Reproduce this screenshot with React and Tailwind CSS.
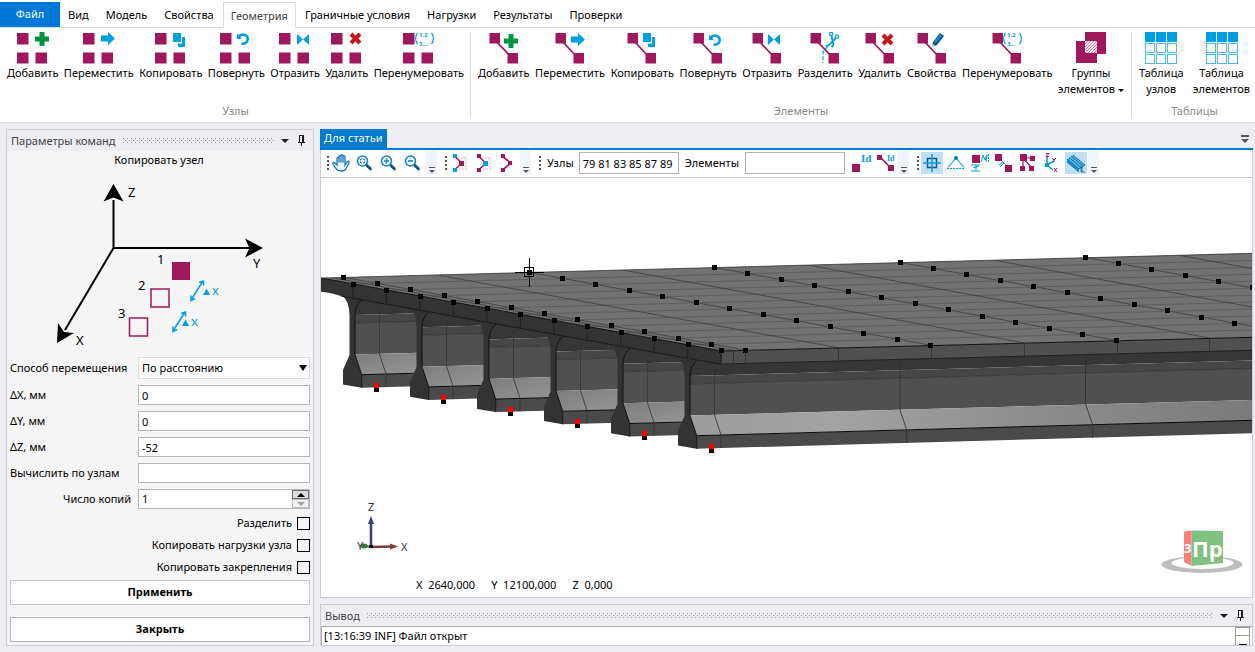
const NODE = '#a0185c';
const BLUE = '#009fe3';

const TABS = ['Вид', 'Модель', 'Свойства', 'Геометрия', 'Граничные условия', 'Нагрузки', 'Результаты', 'Проверки'];

/* ---------- ribbon glyphs ---------- */

const Plus = ({ x, y }) => (
	<path d={`M${x + 4.5} ${y}h5v4.5h4.5v5h-4.5v4.5h-5v-4.5h-4.5v-5h4.5z`} fill="#009640" />
);

const Arrow = ({ x, y }) => (
	<path d={`M${x} ${y + 3.5}h7v-3.5l7 6.5l-7 6.5v-3.500h-7z`} fill={BLUE} />
);

const Copy = ({ x, y }) => (
	<g fill={BLUE}>
		<path d={`M${x} ${y}h8v9h-8z`} />
		<path d={`M${x + 9} ${y + 4}h3v10h-7v-3.500h4z`} />
	</g>
);

const Rotate = ({ x, y }) => (
	<g fill="none" stroke={BLUE}>
		<path d={`M${x + 1.5} ${y + 4}c3 -4.500 9.500 -2.500 9.200 2.500c-.2 3 -3 4.600 -6.200 4.200`} strokeWidth="2.600" />
		<path d={`M${x} ${y + .5}v5.500h5z`} fill={BLUE} stroke="none" />
	</g>
);

const Mirror = ({ x, y }) => (
	<path d={`M${x} ${y}l6 5.500l6 -5.500v11l-6 -5.500l-6 5.500z`} fill={BLUE} />
);

const Cross = ({ x, y }) => (
	<path d={`M${x + 2} ${y + 2}l9 9M${x + 11} ${y + 2}l-9 9`} stroke="#c5161d" strokeWidth="4" />
);

const Numbers = ({ x, y }) => (
	<g fill="none" stroke={BLUE} strokeWidth="1.200">
		<path d={`M${x + 2.5} ${y}c-2.500 3 -2.500 8 0 11M${x + 16.5} ${y}c2.500 3 2.500 8 0 11`} />
		<g fontSize="6" fontWeight="700" fill={BLUE} stroke="none">
			<text x={x + 4} y={y + 4}>1,2</text>
			<text x={x + 4} y={y + 13}>3…</text>
		</g>
	</g>
);

const Scissors = ({ x, y }) => (
	<g fill="none" stroke={BLUE} strokeWidth="1.200">
		<circle cx={x + 5} cy={y + 2} r="1.700" />
		<circle cx={x + 11} cy={y + 4.5} r="1.700" />
		<path d={`M${x + 5.5} ${y + 4}l2 9l-2 2M${x + 10} ${y + 6}l-7 7l-3.500 1`} strokeWidth="1.800" />
		<path d={`M${x + 2} ${y + 14}l-5 6v11`} strokeDasharray="4 2" />
	</g>
);

const Pencil = ({ x, y }) => (
	<g>
		<path d={`M${x - 2} ${y + 14}l1 -5l7 -9l4 3l-7 9z`} fill="#17507f" />
		<path d={`M${x + 1} ${y + 9.5}l6 -7.500`} stroke={BLUE} strokeWidth="2" />
		<path d={`M${x - 2} ${y + 14}l.8 -3l2.200 1.800z`} fill="#dde8ef" />
	</g>
);

const NodesIcon = ({ children }) => (
	<svg width="32" height="32" viewBox="0 0 32 32">
		<path d="M0 1h11.500v11.500h-11.500zM0 20.500h11.500v11h-11.500zM18.500 20.500h11.500v11h-11.500z" fill={NODE} />
		{children}
	</svg>
);

const ElementIcon = ({ children }) => (
	<svg width="32" height="32" viewBox="0 0 32 32">
		<path d="M7 8l17 18" stroke={NODE} strokeWidth="1.800" />
		<path d="M1.500 1h10.500v10.500h-10.500zM19.500 21h10.500v10.500h-10.500z" fill={NODE} />
		{children}
	</svg>
);

const GroupsIcon = () => (
	<svg width="32" height="32" viewBox="0 0 32 32">
		<path d="M10 0h21v22h-21zM1 9h21v22h-21z" fill={NODE} />
		<path d="M10 9h12v12h-12z" fill="#f7e6ee" />
		<path d="M10 12l3 -3M10 15l6 -6M10 18l9 -9M10 21l12 -12M13 21l9 -9M16 21l6 -6M19 21l3 -3" stroke={NODE} strokeWidth=".5" />
	</svg>
);

const TableIcon = () => (
	<svg width="32" height="32" viewBox="0 0 32 32" shapeRendering="crispEdges">
		<path d="M0 0h10v10h-10zM11 0h10v10h-10zM22 0h10v10h-10z" fill={BLUE} />
		<g fill="none" stroke="#4db8e8">
			{[0, 11, 22].map((x) => (
				<path key={x} d={`M${x + .5} 11.500h9v9h-9zM${x + .5} 22.500h9v9h-9z`} />
			))}
		</g>
	</svg>
);

const NODE_TOOLS = [
	['Добавить', <NodesIcon><Plus x={18} y={0} /></NodesIcon>],
	['Переместить', <NodesIcon><Arrow x={18} y={0} /></NodesIcon>],
	['Копировать', <NodesIcon><Copy x={18} y={1} /></NodesIcon>],
	['Повернуть', <NodesIcon><Rotate x={17} y={1} /></NodesIcon>],
	['Отразить', <NodesIcon><Mirror x={18} y={2} /></NodesIcon>],
	['Удалить', <NodesIcon><Cross x={18} y={0} /></NodesIcon>],
	['Перенумеровать', <NodesIcon><Numbers x={12} y={1} /></NodesIcon>],
];

const ELEMENT_TOOLS = [
	['Добавить', <ElementIcon><Plus x={16} y={2} /></ElementIcon>],
	['Переместить', <ElementIcon><Arrow x={17} y={1} /></ElementIcon>],
	['Копировать', <ElementIcon><Copy x={17} y={1} /></ElementIcon>],
	['Повернуть', <ElementIcon><Rotate x={17} y={2} /></ElementIcon>],
	['Отразить', <ElementIcon><Mirror x={17} y={2} /></ElementIcon>],
	['Разделить', <ElementIcon><Scissors x={17} y={0} /></ElementIcon>],
	['Удалить', <ElementIcon><Cross x={17} y={1} /></ElementIcon>],
	['Свойства', <ElementIcon><Pencil x={18} y={1} /></ElementIcon>],
	['Перенумеровать', <ElementIcon><Numbers x={12} y={1} /></ElementIcon>],
];

const RibbonButton = ({ icon, children }) => (
	<button type="button" className="flex flex-col items-center px-[2px] leading-4 whitespace-nowrap hover:bg-sky-50">
		<span className="mb-px block size-8">{icon}</span>
		<span>{children}</span>
	</button>
);

const RibbonGroup = ({ title, className, children }) => (
	<section className={`flex flex-col justify-between ${className}`}>
		<div className="flex justify-between">{children}</div>
		<h2 className="text-center leading-4 text-[#8a8a8a]">{title}</h2>
	</section>
);

const Ribbon = () => (
	<header className="border-b border-[#dcdce0] bg-white">
		<nav className="flex items-end gap-px border-b border-[#dcdce0] pt-[2px] leading-6">
			<button type="button" className="-mr-px w-[60px] bg-[#0078d7] pb-px text-white">Файл</button>
			{TABS.map((tab) => (
				<button
					key={tab}
					type="button"
					className={
						tab === 'Геометрия'
							? '-mb-px border border-b-0 border-[#dcdce0] bg-white px-[7px] pt-px text-[#444]'
							: 'px-2 pt-px'
					}
				>
					{tab}
				</button>
			))}
		</nav>
		<div className="flex h-[94px] pt-1 pb-[3px]">
			<RibbonGroup title="Узлы" className="w-[471px] border-r border-[#dcdce0] pr-1 pl-[5px]">
				{NODE_TOOLS.map(([label, icon]) => (
					<RibbonButton key={label} icon={icon}>{label}</RibbonButton>
				))}
			</RibbonGroup>
			<RibbonGroup title="Элементы" className="w-[661px] border-r border-[#dcdce0] pr-[5px] pl-[5px]">
				{ELEMENT_TOOLS.map(([label, icon]) => (
					<RibbonButton key={label} icon={icon}>{label}</RibbonButton>
				))}
				<RibbonButton icon={<GroupsIcon />}>
					Группы
					<br />
					элементов <span className="inline-block border-x-[3px] border-t-[3px] border-x-transparent border-t-black align-middle" />
				</RibbonButton>
			</RibbonGroup>
			<RibbonGroup title="Таблицы" className="flex-1 pr-[3px] pl-[5px]">
				<RibbonButton icon={<TableIcon />}>Таблица<br />узлов</RibbonButton>
				<RibbonButton icon={<TableIcon />}>Таблица<br />элементов</RibbonButton>
			</RibbonGroup>
		</div>
	</header>
);

/* ---------- tool window header ---------- */

const PanelHeader = ({ title, id }) => (
	<div className="flex h-[21px] items-center bg-[#eeeef2] pr-2 pl-1 text-[#444]">
		<h2 className="leading-4">{title}</h2>
		<svg className="mx-[7px] h-[5px] min-w-0 flex-1" shapeRendering="crispEdges">
			<pattern id={id} width="4" height="4" patternUnits="userSpaceOnUse">
				<path d="M0 0h1v1h-1zM2 2h1v1h-1z" fill="#999" />
			</pattern>
			<rect width="100%" height="5" fill={`url(#${id})`} />
		</svg>
		<button type="button" aria-label="Меню окна" className="mr-[9px]">
			<svg width="8" height="4" viewBox="0 0 8 4"><path d="M0 0h8l-4 4z" fill="#1e1e1e" /></svg>
		</button>
		<button type="button" aria-label="Закрепить">
			<svg width="7" height="11" viewBox="0 0 7 11" fill="none" stroke="#1e1e1e" shapeRendering="crispEdges">
				<path d="M1.500 7v-6.500h4v6.500M0 7.500h7M3.500 7v4M4.500 1v6" />
			</svg>
		</button>
	</div>
);

/* ---------- command parameters ---------- */

const CopyDiagram = () => (
	<svg className="block w-full" viewBox="7 169 306 186" fontSize="13">
		<g stroke="#000" strokeWidth="2">
			<path d="M113.500 248V200M113 248H250M113.500 248L65 330" />
		</g>
		<path d="M113.500 184l10 17.500l-10 -4l-10 4zM263 248l-18 -9.500l4.500 9.500l-4.500 9.500zM57 343l1 -20l6 9l10 1z" />
		<text x="128" y="197">Z</text>
		<text x="253" y="268">Y</text>
		<text x="76" y="345">X</text>
		<text x="157" y="264">1</text>
		<text x="138" y="290">2</text>
		<text x="118" y="318">3</text>
		<path d="M172 262h18v18h-18z" fill={NODE} />
		<path d="M151 289h18v18h-18zM129.500 318h18v18h-18z" fill="#f9f5f7" stroke={NODE} strokeWidth="1.500" />
		<g stroke={BLUE} strokeWidth="1.500" fill="none">
			<path d="M191 300L203 281M191 295.500v5l4 -2M199 282.500l4.500 -1.500v4.500" />
			<path d="M173 331L185 312M173 326.500v5l4 -2M181 313.500l4.500 -1.500v4.500" />
		</g>
		<g fill={BLUE}>
			<path d="M203 295l3.500 -6.500l3.500 6.500zM182 326l3.500 -6.500l3.500 6.500z" />
			<text x="212" y="295">x</text>
			<text x="191" y="326">x</text>
		</g>
	</svg>
);

const FIELDS = [
	['dx', 'ΔX, мм', '0'],
	['dy', 'ΔY, мм', '0'],
	['dz', 'ΔZ, мм', '-52'],
	['byNodes', 'Вычислить по узлам', ''],
];

const CHECKS = ['Разделить', 'Копировать нагрузки узла', 'Копировать закрепления'];

const CommandPanel = () => (
	<aside className="flex w-[308px] shrink-0 flex-col border border-[#ccccdc] bg-[#f5f5f5]">
		<PanelHeader title="Параметры команд" id="dots-params" />
		<h3 className="pr-[2px] text-center leading-[18px]">Копировать узел</h3>
		<CopyDiagram />
		<form className="flex flex-1 flex-col px-[3px] pt-[2px] pb-[3px]" onSubmit={(e) => e.preventDefault()}>
			<div className="grid grid-cols-[128px_minmax(0,1fr)] items-center gap-y-[6px]">
				<label htmlFor="method" className="whitespace-nowrap">Способ перемещения</label>
				<div className="relative">
					<select id="method" className="block h-[22px] w-full appearance-none border border-[#dcdcdc] bg-white px-[3px]">
						<option>По расстоянию</option>
					</select>
					<span className="pointer-events-none absolute top-2 right-[3px] border-x-4 border-t-[6px] border-x-transparent border-t-black" />
				</div>
				{FIELDS.map(([id, label, value]) => (
					<div key={id} className="contents">
						<label htmlFor={id}>{label}</label>
						<input id={id} defaultValue={value} className="h-5 w-full border border-[#b4b4b4] bg-white px-[3px]" />
					</div>
				))}
				<label htmlFor="count" className="pr-[7px] text-right">Число копий</label>
				<div className="flex h-5 border border-[#b4b4b4] bg-white">
					<input id="count" defaultValue="1" className="min-w-0 flex-1 px-[3px]" />
					<div className="grid w-[17px] grid-rows-2">
						<button type="button" aria-label="Больше" className="grid place-items-center border border-[#707070] bg-[#dcdcdc]">
							<svg width="8" height="4" viewBox="0 0 8 4"><path d="M0 4h8l-4 -4z" /></svg>
						</button>
						<button type="button" aria-label="Меньше" className="grid place-items-center border border-[#c0c0c0] bg-[#f0f0f0]">
							<svg width="8" height="4" viewBox="0 0 8 4"><path d="M0 0h8l-4 4z" fill="#a0a0a0" /></svg>
						</button>
					</div>
				</div>
			</div>
			<div className="mt-[3px] mb-[2px]">
				{CHECKS.map((label) => (
					<label key={label} className="flex h-[22px] items-center justify-end gap-[5px]">
						{label}
						<input type="checkbox" className="size-[13px] appearance-none border border-black checked:bg-black" />
					</label>
				))}
			</div>
			<button type="submit" className="h-[25px] border border-[#c8c8c8] bg-white font-bold">Применить</button>
			<button type="button" className="mt-auto h-[25px] border border-[#b4b4b4] bg-white font-bold">Закрыть</button>
		</form>
	</aside>
);

/* ---------- view toolbar ---------- */

const Grip = () => (
	<svg className="mr-px ml-[5px] shrink-0" width="3" height="14" viewBox="0 0 3 14" shapeRendering="crispEdges">
		<path d="M1.500 0v14" stroke="#555" strokeWidth="2" strokeDasharray="2 2" />
	</svg>
);

const Overflow = () => (
	<button type="button" aria-label="Ещё" className="mr-[2px] flex h-6 w-[11px] items-end justify-center bg-[#f0f4fb] pb-px">
		<svg width="6" height="7" viewBox="0 0 6 7">
			<path d="M0 .5h6" stroke="#555" />
			<path d="M0 3h6l-3 3z" fill="#555" />
		</svg>
	</button>
);

const Tool = ({ label, active, children }) => (
	<button type="button" aria-label={label} className="grid h-6 w-6 place-items-center">
		<span className={active ? 'grid size-[22px] place-items-center bg-[#bfdffb]' : 'grid place-items-center'}>
			<svg width="20" height="20" viewBox="0 0 20 20" fill="none">{children}</svg>
		</span>
	</button>
);

const Lens = ({ children }) => (
	<g transform="translate(-2 0)">
		<path d="M12.500 12l4 4" stroke="#17507f" strokeWidth="2.800" strokeLinecap="round" />
		<circle cx="8.500" cy="8" r="5" stroke="#1683c4" strokeWidth="1.600" fill="#f4fbff" />
		<g stroke="#1683c4" strokeWidth="1.600">{children}</g>
	</g>
);

const square = (x, y, s = 4) => `M${x} ${y}h${s}v${s}h-${s}z`;

const ViewToolbar = () => (
	<div className="flex h-7 items-center border-b border-[#ccc] bg-white pb-px">
		<Grip />
		<Tool label="Панорама">
			<path d="M5 12v-6.500c0-1.500 2-1.500 2 0v4v-6c0-1.500 2-1.500 2 0v6v-6.800c0-1.500 2-1.500 2 0v6.800v-5.500c0-1.500 2-1.500 2 0v8l2-3c1-1.500 2.600-.5 2 .8l-3 6c-1.500 3-8 3-10-.3l-3-4.500c-.6-1.500 1-2 2-1z" fill="#eaf6fd" stroke="#1475b5" strokeWidth="1.300" />
		</Tool>
		<Tool label="Показать всё"><Lens><path d="M6.500 7.500v-1.500h1.500M9 6h1.500v1.500M10.500 8.500v1.500h-1.500M8 10h-1.500v-1.500" strokeWidth="1" /></Lens></Tool>
		<Tool label="Увеличить"><Lens><path d="M6 8h5M8.500 5.500v5" /></Lens></Tool>
		<Tool label="Уменьшить"><Lens><path d="M6 8h5" /></Lens></Tool>
		<Overflow />
		<Grip />
		<Tool label="Выбрать узлы">
			<path d="M5 4l7 6l-7 6.500" stroke={NODE} strokeWidth="1.500" />
			<path d="M8 5h8v11h-8" stroke="#dba6c0" strokeDasharray="2 1" />
			<path d={square(3, 1) + square(3, 15)} fill={BLUE} />
			<path d={square(9, 8, 5)} fill={NODE} />
		</Tool>
		<Tool label="Выбрать узел и элементы">
			<path d="M5 4l7 6l-7 6.500" stroke={NODE} strokeWidth="1.500" />
			<path d="M8 5h8v11h-8" stroke="#dba6c0" strokeDasharray="2 1" />
			<path d={square(3, 1) + square(3, 15)} fill={NODE} />
			<path d={square(9, 8, 5)} fill={BLUE} />
		</Tool>
		<Tool label="Выбрать элементы">
			<path d="M5 4l8 6l-8 6.500" stroke={NODE} strokeWidth="1.700" />
			<path d={square(3, 1) + square(3, 15) + square(10, 8)} fill={NODE} />
		</Tool>
		<Overflow />
		<Grip />
		<label htmlFor="nodes" className="mr-[5px] ml-[5px]">Узлы</label>
		<input id="nodes" defaultValue="79 81 83 85 87 89" className="h-[22px] w-[100px] border border-[#b4b4b4] bg-white px-[3px]" />
		<label htmlFor="elements" className="mx-[6px]">Элементы</label>
		<input id="elements" className="mr-[5px] h-[22px] w-[100px] border border-[#b4b4b4] bg-white px-[3px]" />
		<Tool label="Номера узлов">
			<path d={square(0, 11, 8)} fill={NODE} />
			<text x="9" y="9" fontSize="11" fill={BLUE} className="font-['Liberation_Serif',serif] font-bold">Id</text>
		</Tool>
		<Tool label="Номера элементов">
			<path d="M4 4l10 10" stroke={NODE} strokeWidth="1.500" />
			<path d={square(1, 2, 5) + square(12, 12, 6)} fill={NODE} />
			<text x="11" y="8" fontSize="8" fill={BLUE} className="font-['Liberation_Serif',serif] font-bold">Id</text>
		</Tool>
		<Overflow />
		<Grip />
		<Tool label="Узлы сетки" active>
			<path d="M5.500 5.500h9v9h-9z" stroke="#17507f" strokeWidth="1.500" />
			<path d="M10 1v18M1 10h18" stroke={BLUE} strokeWidth="1.500" />
		</Tool>
		<Tool label="Закрепления">
			<path d="M10 5L2 14.500M10 5L18 14.500" stroke={BLUE} strokeWidth="1.100" />
			<path d="M1 15.500h18" stroke={BLUE} strokeDasharray="2 1" />
			<circle cx="10" cy="5" r="2" fill="#1475b5" />
		</Tool>
		<Tool label="Нагрузки">
			<path d={square(2, 2, 8)} fill={NODE} />
			<path d="M11 9l2-7l2 5l2-5l-1 7M1 12h9M3 15l6-2M1 18h9M6 12v5" stroke={BLUE} />
			<path d="M18.500 1v8" stroke={BLUE} strokeDasharray="2 1" />
		</Tool>
		<Tool label="Шарниры">
			<path d="M3 3l14 14" stroke={NODE} strokeDasharray="2 1" />
			<path d={square(1, 1, 7) + square(11, 12, 7)} fill={NODE} />
			<path d="M5 12l4-3M6 14l4-4" stroke={BLUE} />
		</Tool>
		<Tool label="Жёсткие связи">
			<path d="M5 5v11M5 5l9 10M6 5h10" stroke={NODE} strokeWidth="1.200" />
			<path d={square(2, 1, 7) + square(12, 3, 5) + square(2, 13, 5) + square(11, 13, 5)} fill={NODE} />
		</Tool>
		<Tool label="Оси">
			<path d="M5 4v8l7-4M5 12l6 5" stroke={BLUE} strokeWidth="1.500" />
			<path d={square(3, 10)} fill={BLUE} />
			<path d="M4 .5h3l-3 3h3M10 5l2 2l2-2M12 7v2M12 15l3 4M15 15l-3 4" stroke={NODE} />
		</Tool>
		<Tool label="Объёмный вид" active>
			<path d="M1 6l6-4l12 10l-6 4z" fill="#4fb9ea" />
			<path d="M1 6v3l12 10v-3z" fill={BLUE} />
			<path d="M1 6l12 10l6-4M3 4.500l12 10M5 3l12 10M7 2l12 10M1 9l12 10M15 14v5h4M16 13v6" stroke="#17507f" strokeWidth=".8" />
		</Tool>
		<Overflow />
	</div>
);

/* ---------- 3D scene ---------- */

// one step between neighbouring deck nodes, along the slab end
const STEP = [33.47, 6.07];
// one step between neighbouring girders
const BEAM = [67, 12.2];
const SLOPE = -0.0263;

const NODE_ROWS = [
	[343.7, 277.3, 13],
	[353.4, 284, 12],
	[529, 272.3, 13],
	[714.4, 267.5, 13],
	[900, 262.4, 11],
	[1085, 257.4, 6],
];

const MESH_STARTS = [
	[331.7, 277.6],
	[343.7, 277.3],
	[436.7, 274.9],
	[529, 272.3],
	[621.7, 269.9],
	[714.4, 267.5],
	[807.2, 265],
	[900, 262.4],
	[992.5, 259.9],
	[1085, 257.4],
	[1177.5, 255],
];

const strip = (y1, y2, x1, x2, w) =>
	`M${x1} ${y1}L${x1 + w} ${y1 - 0.0277 * w}V${y2 - 0.0277 * w}L${x2} ${y2}z`;

const Girder = ({ i, width }) => {
	const slope = (y) => y - 0.0277 * width;
	return (
		<g transform={`translate(${i * BEAM[0]} ${i * BEAM[1]})`}>
			<path d={strip(292, 315, 355, 355, width)} fill="#363636" />
			<path d={strip(315, 323, 355, 355, width)} fill="#464646" />
			<path d={strip(323, 354.5, 355, 355, width)} fill="#505050" />
			<path d={strip(354.5, 374.7, 355, 361.7, width)} fill={width > 100 ? 'url(#flangeLong)' : 'url(#flange)'} />
			<path d={strip(374.7, 387.7, 361.7, 361.7, width)} fill="#4a4a4a" />
			<path d={`M355 323L${355 + width} ${slope(323)}`} stroke="#2c2c2c" strokeWidth=".8" fill="none" />
			<path d={`M361.700 374.700L${361.7 + width} ${slope(374.7)}`} stroke="#0a0a0a" fill="none" />
			<path d="M382 304q-2.500 4 -2.500 13v37l6.500 20v13" stroke="#333" strokeWidth=".8" fill="none" />
			<path
				d="M338 295c8 1 11 8 11.500 20v40l-6.500 15v14.500l18.700 3.200v-13l-6.700 -20.200v-39.500q0 -10 7.500 -16z"
				fill="#333"
			/>
			<path d="M361.700 387.700v-13l-6.700 -20.200v-39.500q0 -10 7.500 -16" stroke="#111" strokeWidth="1" fill="none" />
		</g>
	);
};

const Scene = () => (
	<svg className="block w-full" viewBox="321 178 931 419">
		<defs>
			<linearGradient id="flange" x1="0" y1="0" x2="1" y2="1">
				<stop offset="0" stopColor="#7c7c7c" />
				<stop offset="1" stopColor="#969696" />
			</linearGradient>
			<linearGradient id="flangeLong">
				<stop offset="0" stopColor="#9c9c9c" />
				<stop offset=".25" stopColor="#a3a3a3" />
				<stop offset=".6" stopColor="#8d8d8d" />
				<stop offset="1" stopColor="#7a7a7a" />
			</linearGradient>
			<clipPath id="deckClip">
				<path d="M321 278L1252 253.300V337.300L722 351z" />
			</clipPath>
		</defs>

		{[0, 1, 2, 3, 4].map((i) => <Girder key={i} i={i} width={65} />)}
		<Girder i={5} width={575} />
		<g stroke="#2f2f2f" strokeWidth=".8" fill="none">
			<path d="M902.500 360q-2.500 4 -2.500 12v38l6.700 20v13" />
			<path d="M1088.500 355q-3 5 -3 14v35l7.200 21v13" />
		</g>

		<path d="M722 351L1252 337.300V350.300L722 364z" fill="#505050" />
		<path d="M722 364L1252 350.300" stroke="#222" />
		<g stroke="#2f2f2f" strokeWidth=".8">
			{[733.5, 745.5, 838.5, 931.5, 1024.5, 1117.5, 1209.5].map((x) => (
				<path key={x} d={`M${x} ${351 - (x - 722) * 0.0259}v13`} />
			))}
		</g>

		<path d="M321 278L722 351V364.500L341 296q-8 -3 -20 -4.300z" fill="#333" />
		<path d="M341 296L722 364.500" stroke="#111" strokeWidth=".7" />
		<g stroke="#1c1c1c" strokeWidth=".8">
			{Array.from({ length: 12 }, (_, j) => (
				<path key={j} d={`M${353 + j * STEP[0]} ${284 + j * STEP[1]}v13`} />
			))}
		</g>

		<path d="M321 278L1252 253.300V337.300L722 351z" fill="#727272" />
		<g clipPath="url(#deckClip)" stroke="#585858" strokeWidth=".8">
			{Array.from({ length: 12 }, (_, j) => {
				const x = 320 + j * STEP[0];
				const y = 278 + j * STEP[1];
				return <path key={j} d={`M${x} ${y}L1252 ${y + (1252 - x) * SLOPE}`} />;
			})}
		</g>
		<g clipPath="url(#deckClip)" stroke="#383838" strokeWidth=".7">
			{MESH_STARTS.map(([x, y]) => (
				<path key={x} d={`M${x} ${y}l${STEP[0] * 12} ${STEP[1] * 12}`} />
			))}
		</g>
		<path d="M321 278L722 351" stroke="#111" />
		<path d="M722 351L1252 337.300" stroke="#111" />
		<path d="M321 278L1252 253.300" stroke="#444" strokeWidth=".8" />

		<g shapeRendering="crispEdges">
			{NODE_ROWS.map(([x, y, n]) =>
				Array.from({ length: n }, (_, j) => (
					<rect key={`${x}-${j}`} x={Math.round(x + j * STEP[0] - 2.5)} y={Math.round(y + j * STEP[1] - 2.5)} width="5" height="5" />
				))
			)}
			{[0, 1, 2, 3, 4, 5].map((i) => {
				const x = Math.round(374.3 + i * BEAM[0]);
				const y = Math.round(382.5 + i * BEAM[1]);
				return (
					<g key={i}>
						<rect x={x} y={y + 4} width="5" height="5" />
						<rect x={x} y={y} width="5" height="5" fill="#f00" />
					</g>
				);
			})}
			<path d="M529.500 258v29M515 272.500h29M524.500 267.500h9v9h-9z" stroke="#000" fill="none" />
		</g>
	</svg>
);

const Triad = () => (
	<svg width="60" height="60" viewBox="354 494 60 60" className="absolute bottom-[43px] left-[33px]" fontSize="11">
		<path d="M371 547L362 545.500" stroke="#3a7a3a" strokeWidth="2" />
		<ellipse cx="364" cy="546" rx="3.500" ry="2.500" fill="#3a7a3a" />
		<path d="M371 547L392 546.500" stroke="#7d3c3c" strokeWidth="2.500" />
		<path d="M390 543.500l8 3l-8 3z" fill="#7d3c3c" />
		<path d="M371 546V522" stroke="#3b3b7d" strokeWidth="2.500" />
		<path d="M368 524l3 -8l3 8z" fill="#3b3b7d" />
		<path d="M369 545h4v3h-4z" />
		<g fill="#333">
			<text x="368" y="511">Z</text>
			<text x="357" y="550">Y</text>
			<text x="401" y="551">X</text>
		</g>
	</svg>
);

const CubeLogo = () => (
	<svg width="84" height="46" viewBox="1160 529 84 46" className="absolute right-[8px] bottom-[22px]">
		<path d="M1161.500 564.500a40.500 8.500 0 1 0 81 0a40.500 8.500 0 1 0 -81 0zM1171.500 563a31 6 0 1 1 62 0a31 6 0 1 1 -62 0z" fill="#bdbdbd" fillRule="evenodd" />
		<path d="M1184 531.500l7.500 -1v35.500l-7.500 -4z" fill="#ff7f7f" />
		<path d="M1191.500 530.500l31.500 .500v32l-31.500 3z" fill="#80c080" />
		<g fill="#fff" className="font-bold">
			<text x="1184" y="553" fontSize="13">З</text>
			<text x="1192" y="557" fontSize="22">Пр</text>
		</g>
	</svg>
);

const Viewport = () => (
	<section className="flex flex-col">
		<div className="flex items-center justify-between border-b-2 border-[#007acc] pr-1">
			<button type="button" className="h-[19px] bg-[#007acc] px-1 text-white">Для статьи</button>
			<button type="button" aria-label="Список окон">
				<svg width="8" height="8" viewBox="0 0 8 8" fill="#555"><path d="M0 0h8v2h-8zM0 4h8l-4 4z" /></svg>
			</button>
		</div>
		<div className="border border-t-0 border-[#ccccdc] bg-white">
			<ViewToolbar />
			<div className="relative">
				<Scene />
				<Triad />
				<CubeLogo />
				<p className="absolute bottom-[3px] left-[95px] flex gap-4 leading-[18px]">
					<span>X&nbsp; 2640,000</span>
					<span>Y&nbsp; 12100,000</span>
					<span>Z&nbsp; 0,000</span>
				</p>
			</div>
		</div>
	</section>
);

const OutputPanel = () => (
	<section className="flex flex-1 flex-col border border-[#ccccdc]">
		<PanelHeader title="Вывод" id="dots-output" />
		<div className="flex flex-1 justify-between border-t border-l border-[#a8a8a8] bg-white">
			<output className="pl-[2px] leading-[18px]">[13:16:39 INF] Файл открыт</output>
			<div className="mr-[2px] flex w-[15px] flex-col border border-b-0 border-[#a09c8c]">
				<span className="h-2 border-b border-[#a09c8c]" />
				<span className="mx-auto mt-auto h-px w-2 bg-black" />
			</div>
		</div>
	</section>
);

const App = () => (
	<div className="flex min-h-screen flex-col bg-[#eeeef2] font-['Noto_Sans',sans-serif] text-[11px] text-black">
		<Ribbon />
		<main className="flex flex-1 gap-[6px] py-[6px] pr-[2px] pl-[6px]">
			<CommandPanel />
			<div className="flex min-w-0 flex-1 flex-col gap-[6px]">
				<Viewport />
				<OutputPanel />
			</div>
		</main>
	</div>
);

export default App;
